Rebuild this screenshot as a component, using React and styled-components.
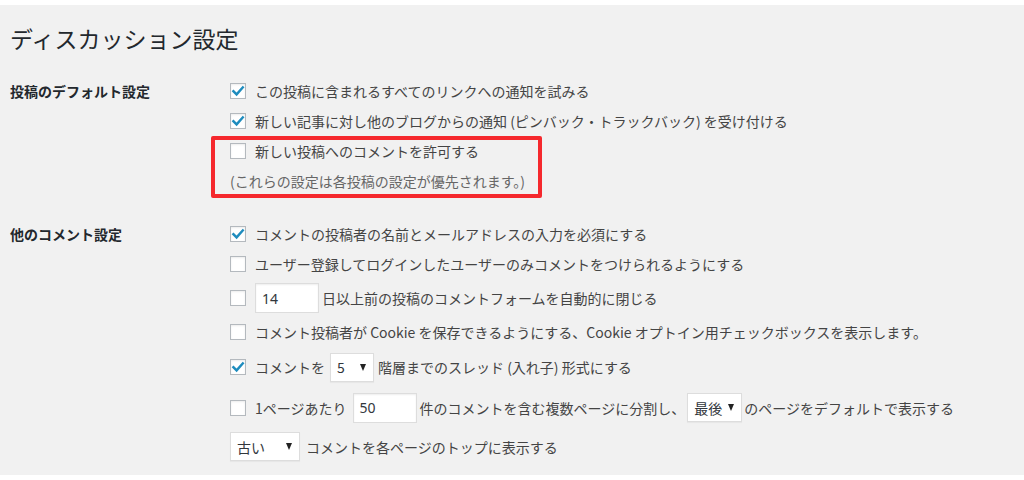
import React from "react";
import styled, { createGlobalStyle } from "styled-components";

const Global = createGlobalStyle`
  html, body { margin: 0; padding: 0; background: #fff; }
  body {
    font-family: "Noto Sans CJK JP", "Noto Sans", sans-serif;
    font-size: 14px;
    color: #444;
  }
`;

const Page = styled.div`
  margin-top: 5px;
  height: 470px;
  background: #f1f1f1;
  padding: 19px 0 0 10px;
  box-sizing: border-box;
  overflow: hidden;
`;

const Title = styled.h1`
  margin: 0 0 23px;
  font-size: 23px;
  line-height: 29px;
  font-weight: 400;
  color: #23282d;
  letter-spacing: 0;
`;

const Section = styled.div`
  display: grid;
  grid-template-columns: 220px 1fr;
  margin-bottom: ${(p) => p.$gap || 0}px;
`;

const Label = styled.div`
  font-weight: 700;
  color: #23282d;
  line-height: 30px;
  height: 30px;
`;

const Fields = styled.div`
  display: flex;
  flex-direction: column;
`;

const Row = styled.div`
  display: flex;
  align-items: center;
  height: ${(p) => p.$h || 30}px;
  white-space: nowrap;
  color: ${(p) => (p.$muted ? "#666" : "#444")};
`;

const Highlight = styled.div`
  position: relative;
`;

const RedBox = styled.div`
  position: absolute;
  left: -19px;
  top: 0px;
  width: 331px;
  height: 62px;
  border: 4px solid #f5282d;
  border-radius: 2px;
  box-sizing: border-box;
  pointer-events: none;
`;

const Box = styled.span`
  width: 16px;
  height: 16px;
  box-sizing: border-box;
  border: 1px solid #b4b9be;
  background: #fff;
  box-shadow: inset 0 1px 2px rgba(0, 0, 0, 0.08);
  display: inline-flex;
  align-items: center;
  justify-content: center;
  margin-right: 9px;
  flex: none;
`;

const TextInput = styled.span`
  display: inline-flex;
  align-items: center;
  box-sizing: border-box;
  width: ${(p) => p.$w}px;
  height: 30px;
  padding-left: 6px;
  background: #fff;
  border: 1px solid #ddd;
  box-shadow: inset 0 1px 2px rgba(0, 0, 0, 0.07);
  color: #32373c;
  margin: 0 ${(p) => p.$mr ?? 3}px 0 ${(p) => p.$ml ?? 0}px;
  font-family: "Noto Sans", sans-serif;
`;

const Select = styled.span`
  display: inline-flex;
  align-items: center;
  justify-content: space-between;
  box-sizing: border-box;
  width: ${(p) => p.$w}px;
  height: 29px;
  padding: 0 7px 0 6px;
  background: #fff;
  border: 1px solid #ddd;
  box-shadow: 0 1px 1px rgba(0, 0, 0, 0.04);
  color: #32373c;
  margin: 0 ${(p) => p.$mr ?? 4}px 0 ${(p) => p.$ml ?? 0}px;
`;

const Arrow = styled.span`
  width: 0;
  height: 0;
  border-left: 3.5px solid transparent;
  border-right: 3.5px solid transparent;
  border-top: 7px solid #222;
`;

const Check = ({ on }) => (
  <Box>
    {on && (
      <svg width="14" height="14" viewBox="0 0 14 14">
        <path
          d="M2.4 7.2 L5.6 10.4 L11.8 3.4"
          fill="none"
          stroke="#1e8cbe"
          strokeWidth="2.4"
          strokeLinecap="square"
        />
      </svg>
    )}
  </Box>
);

export default function App() {
  return (
    <>
      <Global />
      <Page>
        <Title>ディスカッション設定</Title>
        <Section $gap={23}>
          <Label>投稿のデフォルト設定</Label>
          <Fields>
            <Row>
              <Check on />
              この投稿に含まれるすべてのリンクへの通知を試みる
            </Row>
            <Row>
              <Check on />
              新しい記事に対し他のブログからの通知 (ピンバック・トラックバック) を受け付ける
            </Row>
            <Highlight>
              <Row>
                <Check />
                新しい投稿へのコメントを許可する
              </Row>
              <Row $muted>(これらの設定は各投稿の設定が優先されます。)</Row>
              <RedBox />
            </Highlight>
          </Fields>
        </Section>
        <Section>
          <Label>他のコメント設定</Label>
          <Fields>
            <Row>
              <Check on />
              コメントの投稿者の名前とメールアドレスの入力を必須にする
            </Row>
            <Row>
              <Check />
              ユーザー登録してログインしたユーザーのみコメントをつけられるようにする
            </Row>
            <Row $h={38}>
              <Check />
              <TextInput $w={64}>14</TextInput>
              日以上前の投稿のコメントフォームを自動的に閉じる
            </Row>
            <Row>
              <Check />
              コメント投稿者が Cookie を保存できるようにする、Cookie オプトイン用チェックボックスを表示します。
            </Row>
            <Row $h={40}>
              <Check on />
              コメントを
              <Select $w={44} $ml={5}>
                5<Arrow />
              </Select>
              階層までのスレッド (入れ子) 形式にする
            </Row>
            <Row $h={41}>
              <Check />
              1ページあたり
              <TextInput $w={64} $ml={6}>50</TextInput>
              件のコメントを含む複数ページに分割し、
              <Select $w={55} $ml={2} $mr={2}>
                最後<Arrow />
              </Select>
              のページをデフォルトで表示する
            </Row>
            <Row $h={37}>
              <Select $w={70} $mr={6}>
                古い<Arrow />
              </Select>
              コメントを各ページのトップに表示する
            </Row>
          </Fields>
        </Section>
      </Page>
    </>
  );
}
